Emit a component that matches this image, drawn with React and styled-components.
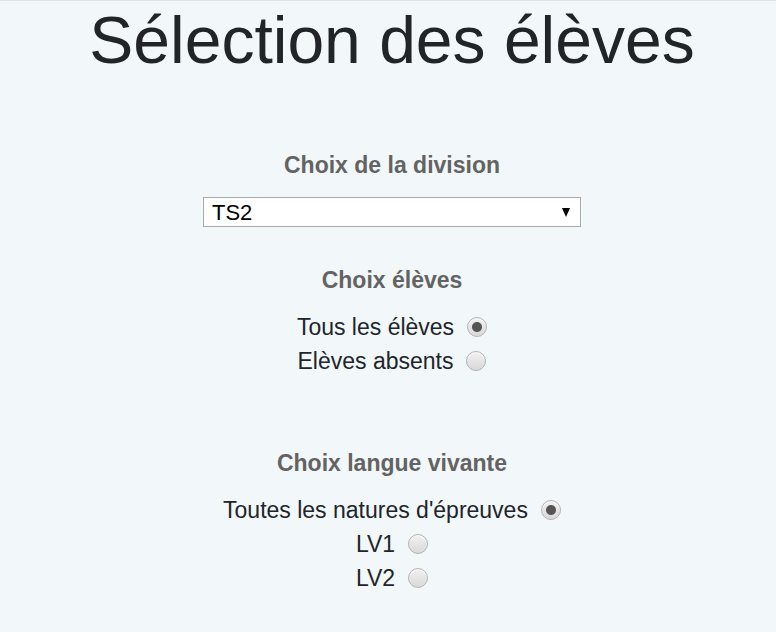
import React, { useState } from "react";
import styled, { createGlobalStyle } from "styled-components";

const GlobalStyle = createGlobalStyle`
  html, body {
    margin: 0;
    padding: 0;
    background: #f2f7fa;
  }
  body {
    font-family: "Liberation Sans", Arial, sans-serif;
    color: #212529;
  }
`;

const Page = styled.div`
  min-height: 631px;
  border-top: 1px solid #dde5eb;
  padding-left: 8px;
  display: flex;
  flex-direction: column;
  align-items: center;
`;

const Title = styled.h1`
  margin: 0;
  font-size: 66px;
  font-weight: 400;
  line-height: 1.2;
  color: #212529;
`;

const Section = styled.section`
  display: flex;
  flex-direction: column;
  align-items: center;
  margin-top: ${(p) => p.$top}px;
`;

const Heading = styled.h3`
  margin: 0 0 ${(p) => p.$gap}px;
  font-size: 23px;
  font-weight: 700;
  line-height: 26px;
  color: #636363;
`;

const SelectWrap = styled.div`
  position: relative;
  width: 378px;
  height: 30px;
`;

const Select = styled.select`
  appearance: none;
  -webkit-appearance: none;
  width: 100%;
  height: 100%;
  box-sizing: border-box;
  margin: 0;
  padding: 0 30px 0 8px;
  border: 1px solid #a9a9a9;
  border-radius: 0;
  background: #fff;
  font-family: "Liberation Sans", Arial, sans-serif;
  font-size: 22px;
  color: #000;
  outline: none;
`;

const Arrow = styled.span`
  position: absolute;
  right: 11px;
  top: 11px;
  width: 0;
  height: 0;
  border-left: 4px solid transparent;
  border-right: 4px solid transparent;
  border-top: 9px solid #000;
  pointer-events: none;
`;

const Row = styled.label`
  display: flex;
  align-items: center;
  gap: 13px;
  height: 34px;
  font-size: 23px;
  line-height: 34px;
  color: #212529;
  cursor: pointer;
`;

const Radio = styled.input.attrs({ type: "radio" })`
  appearance: none;
  -webkit-appearance: none;
  margin: 0 0 1px;
  width: 20px;
  height: 20px;
  border-radius: 50%;
  box-sizing: border-box;
  border: 1px solid #b3b3b3;
  background: linear-gradient(#f1f1f1, #d9d9d9);
  box-shadow: inset 0 1px 1px rgba(255, 255, 255, 0.8);

  &:checked {
    background: radial-gradient(circle, #555 0 4.5px, transparent 5.5px),
      linear-gradient(#f1f1f1, #d9d9d9);
  }
`;

function RadioGroup({ name, options, value, onChange }) {
  return options.map((opt) => (
    <Row key={opt}>
      {opt}
      <Radio name={name} checked={value === opt} onChange={() => onChange(opt)} />
    </Row>
  ));
}

export default function App() {
  const [division, setDivision] = useState("TS2");
  const [eleves, setEleves] = useState("Tous les élèves");
  const [langue, setLangue] = useState("Toutes les natures d'épreuves");

  return (
    <>
      <GlobalStyle />
      <Page>
        <Title>Sélection des élèves</Title>

        <Section $top={72}>
          <Heading $gap={19}>Choix de la division</Heading>
          <SelectWrap>
            <Select value={division} onChange={(e) => setDivision(e.target.value)}>
              <option>TS1</option>
              <option>TS2</option>
              <option>TS3</option>
            </Select>
            <Arrow />
          </SelectWrap>
        </Section>

        <Section $top={40}>
          <Heading $gap={17}>Choix élèves</Heading>
          <RadioGroup
            name="eleves"
            options={["Tous les élèves", "Elèves absents"]}
            value={eleves}
            onChange={setEleves}
          />
        </Section>

        <Section $top={72}>
          <Heading $gap={17}>Choix langue vivante</Heading>
          <RadioGroup
            name="langue"
            options={["Toutes les natures d'épreuves", "LV1", "LV2"]}
            value={langue}
            onChange={setLangue}
          />
        </Section>
      </Page>
    </>
  );
}
